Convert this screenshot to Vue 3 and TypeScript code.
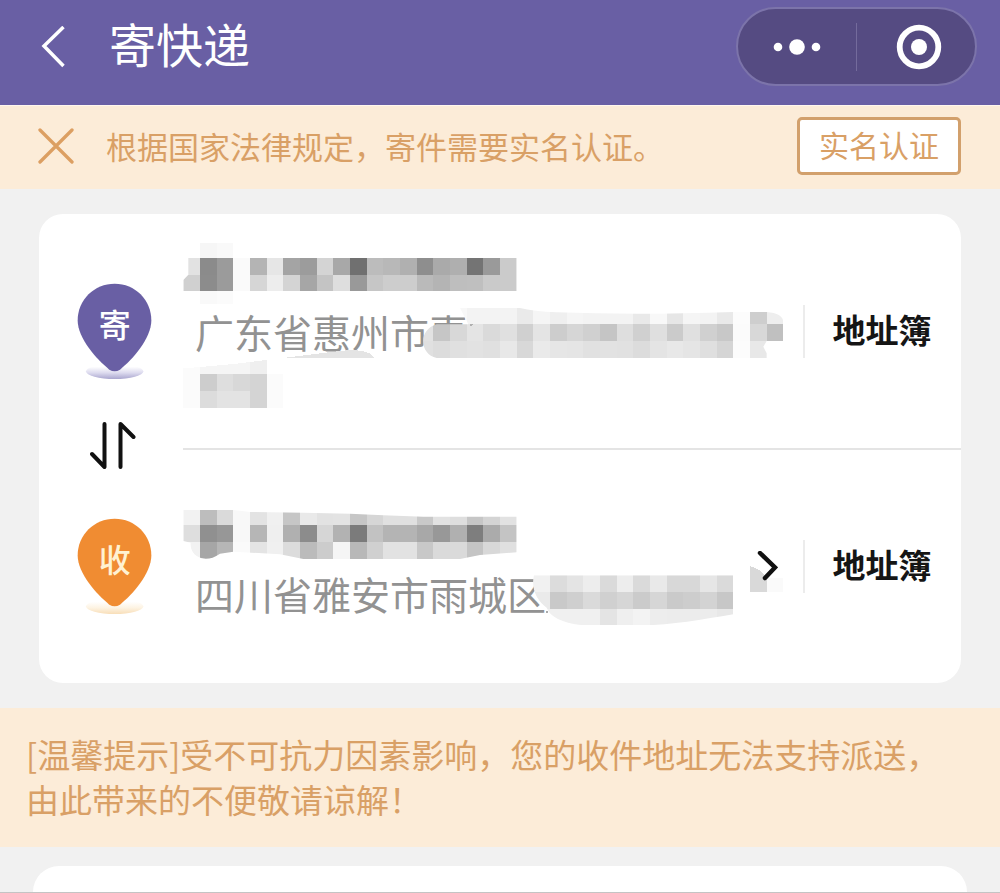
<script setup lang="ts">
interface Strip {
  x: number
  y: number
  h: number
  colors: string
}

interface Cell {
  x: number
  y: number
  w: number
  h: number
  fill: string
}

interface Contact {
  id: string
  label: string
  address: string
  lines: number
  viewBox: string
  height: number
  nameClip: string
  addressClip: string
  name: Cell[]
  detail: Cell[]
  extra: { d: string; fill: string }[]
  chevron: boolean
}

const CELL = 50

// Each strip is a run of equal cells; colours are two-digit grey levels.
function cells(strips: Strip[]): Cell[] {
  return strips.flatMap((s) =>
    s.colors.split(' ').map((c, i) => ({ x: s.x + i * CELL, y: s.y, w: CELL, h: s.h, fill: '#' + c + c + c })),
  )
}

const contacts: Contact[] = [
  {
    id: 'sender',
    label: '寄件人',
    address: '广东省惠州市惠',
    lines: 2,
    viewBox: '39 54 1860 498',
    height: 166,
    nameClip: 'M90 38H190V84H1040V184H190V222H90V184H40V150L55 134V84H90Z',
    addressClip:
      'M870 234H1050Q1090 244 1160 247Q1400 256 1690 246H1790Q1838 250 1840 275V333H1790L1780 350L1790 370V384H800C750 375 742 300 800 283H895Z',
    name: cells([
      { x: 90, y: 38, h: 46, colors: 'f6 f9' },
      { x: 40, y: 84, h: 50, colors: 'e2 8b 9b fa b4 e6 a4 9c d4 a8 70 bc b8 b0 8e aa af 74 9a cb' },
      { x: 40, y: 134, h: 50, colors: 'd0 8c 9b fa d6 ed d4 a6 c4 de 99 c6 cd cd ba b4 be bf ca cb' },
      { x: 90, y: 184, h: 38, colors: 'f9 fb' },
    ]),
    detail: cells([
      { x: 840, y: 234, h: 49, colors: 'f8 f3 f3 f3 ea f5 ef f5 f3 f3 f3 e9 f8 e6 f5 f3 e9 fc ce ee' },
      { x: 740, y: 283, h: 50, colors: 'e2 c6 d8 e4 da e0 d0 e4 cd d6 d0 c5 de d0 df cb e0 d0 c8 fb d8 c0' },
      { x: 740, y: 333, h: 51, colors: 'e0 dc e0 e2 e0 e8 d8 ea e6 e5 e1 e2 e1 dc e4 e8 e5 df d5 fc e8 fe' },
    ]),
    extra: [
      { d: 'M40 415Q180 405 290 390V433H340V533H40Z', fill: '#fbfbfb' },
      { d: 'M90 411Q190 403 240 396V433H90Z', fill: '#f5f5f5' },
      { d: 'M240 396L290 390V433H240Z', fill: '#efefef' },
      { d: 'M90 433H140V483H90Z', fill: '#cdcdcd' },
      { d: 'M140 433H190V483H140Z', fill: '#dedede' },
      { d: 'M190 433H240V483H190Z', fill: '#d8d8d8' },
      { d: 'M240 433H290V533H240Z', fill: '#d4d4d4' },
      { d: 'M90 483H140V533H90Z', fill: '#dcdcdc' },
      { d: 'M140 483H240V533H140Z', fill: '#e3e3e3' },
      { d: 'M340 384Q470 367 530 361Q600 358 612 384Z', fill: '#e4e4e4' },
      { d: 'M896 280L908 283L904 290Z', fill: '#b0b0b0' },
    ],
    chevron: false,
  },
  {
    id: 'receiver',
    label: '收件人',
    address: '四川省雅安市雨城区',
    lines: 1,
    viewBox: '39 57 1860 342',
    height: 114,
    nameClip:
      'M40 57H190L240 63L400 65L540 68L640 73L760 77H1040V184L930 192L870 204H400L330 190L190 182L150 188Q110 215 80 195Q60 180 62 155L40 150Z',
    addressClip:
      'M1092 253H1690V370C1600 385 1500 403 1420 403H1240C1170 395 1140 375 1130 350C1100 330 1082 290 1092 253Z',
    name: cells([
      { x: 40, y: 57, h: 45, colors: 'f2 bd da f8 e3 f0 c6 e9 e2 e3 c6 d6 e0 e0 c9 e2 de c6 d4 e2' },
      { x: 40, y: 102, h: 51, colors: 'de 90 97 f8 b6 ef b0 8c d6 b2 7b c2 b4 b4 a8 98 b0 7e ab c4' },
      { x: 40, y: 153, h: 62, colors: 'f2 a6 b6 fa e4 f0 dc bb cc f5 b8 d0 e2 e2 c8 da da c4 d8 e0' },
    ]),
    detail: cells([
      { x: 1090, y: 253, h: 50, colors: 'f1 dc e4 ed da ed da e9 d8 d8 e6 da' },
      { x: 1090, y: 303, h: 50, colors: 'ea c9 cf da d0 d6 cb d6 ca cd d3 c7' },
      { x: 1090, y: 353, h: 50, colors: 'f0 f0 f0 f0 e4 ef f3 ed ec ec ec e8' },
    ]),
    extra: [
      { d: 'M1740 225Q1780 238 1790 262V302H1740Z', fill: '#d9d9d9' },
      { d: 'M1790 262H1838V302H1790Z', fill: '#fafafa' },
      { d: 'M1128 360H1134V367H1128Z', fill: '#aaaaaa' },
    ],
    chevron: true,
  },
]
</script>

<template>
  <div class="page">
    <header class="header">
      <button class="icon-button" type="button" aria-label="返回">
        <svg width="24" height="42" viewBox="0 0 24 42" fill="none" stroke="#fff" stroke-width="3.500">
          <path d="M22.500 1 3 20 22.500 40" />
        </svg>
      </button>
      <h1 class="title">寄快递</h1>
      <div class="capsule">
        <button class="capsule-button" type="button" aria-label="更多">
          <svg width="48" height="18" viewBox="0 0 48 18" fill="#fff">
            <circle cx="5" cy="9" r="4.300" />
            <circle cx="24" cy="9" r="7.800" />
            <circle cx="43" cy="9" r="4.300" />
          </svg>
        </button>
        <span class="capsule-line"></span>
        <button class="capsule-button close" type="button" aria-label="关闭">
          <svg width="46" height="46" viewBox="0 0 46 46">
            <circle cx="23" cy="23" r="19.300" fill="none" stroke="#fff" stroke-width="5.800" />
            <circle cx="23" cy="23" r="8" fill="#fff" />
          </svg>
        </button>
      </div>
    </header>

    <section class="verify">
      <button class="icon-button" type="button" aria-label="关闭提示">
        <svg width="36" height="36" viewBox="0 0 36 36" fill="none" stroke="#dc9f62" stroke-width="3.300" stroke-linecap="round">
          <path d="M2 2 34 34M34 2 2 34" />
        </svg>
      </button>
      <p class="verify-text">根据国家法律规定，寄件需要实名认证。</p>
      <button class="verify-button" type="button">实名认证</button>
    </section>

    <main class="card">
      <div class="rail">
        <svg class="pin" width="75" height="96" viewBox="54 38 225 288" role="img" aria-label="寄">
          <defs>
            <linearGradient id="shade-send" x1="0" y1="0" x2="0" y2="1">
              <stop offset="0.200" stop-color="#ffffff" />
              <stop offset="0.600" stop-color="#dcdaee" />
              <stop offset="1" stop-color="#aaa6cf" />
            </linearGradient>
          </defs>
          <ellipse cx="167" cy="303" rx="86" ry="23" fill="url(#shade-send)" />
          <path
            d="M167 40C228 40 277 88 277 150C277 205 220 268 183 298Q167 308 151 298C114 268 56 205 56 150C56 88 106 40 167 40Z"
            fill="#695fa4"
          />
          <text class="pin-text" x="167" y="201" fill="#fff">寄</text>
        </svg>
        <button class="icon-button" type="button" aria-label="交换地址">
          <svg width="50" height="56" viewBox="0 0 50 56" fill="none" stroke="#111" stroke-width="4" stroke-linecap="round" stroke-linejoin="round">
            <path d="M2 33 14.500 46V3M30.500 46V3L43.500 16" />
          </svg>
        </button>
        <svg class="pin" width="75" height="96" viewBox="54 38 225 288" role="img" aria-label="收">
          <defs>
            <linearGradient id="shade-receive" x1="0" y1="0" x2="0" y2="1">
              <stop offset="0.200" stop-color="#ffffff" />
              <stop offset="0.600" stop-color="#fdf3e2" />
              <stop offset="1" stop-color="#f8deb8" />
            </linearGradient>
          </defs>
          <ellipse cx="167" cy="303" rx="86" ry="23" fill="url(#shade-receive)" />
          <path
            d="M167 40C228 40 277 88 277 150C277 205 220 268 183 298Q167 308 151 298C114 268 56 205 56 150C56 88 106 40 167 40Z"
            fill="#f08c32"
          />
          <text class="pin-text" x="167" y="201" fill="#fff2d2">收</text>
        </svg>
      </div>

      <div class="contacts">
        <section v-for="c in contacts" :key="c.id" class="contact" :aria-label="c.label">
          <div class="info">
            <p class="address" :class="{ tall: c.lines === 2 }">{{ c.address }}</p>
            <svg class="mosaic" width="620" :height="c.height" :viewBox="c.viewBox" shape-rendering="crispEdges" aria-hidden="true">
              <defs>
                <clipPath :id="c.id + '-name'"><path :d="c.nameClip" /></clipPath>
                <clipPath :id="c.id + '-detail'"><path :d="c.addressClip" /></clipPath>
              </defs>
              <g :clip-path="`url(#${c.id}-name)`">
                <rect v-for="(r, i) in c.name" :key="i" :x="r.x" :y="r.y" :width="r.w" :height="r.h" :fill="r.fill" />
              </g>
              <g :clip-path="`url(#${c.id}-detail)`">
                <rect v-for="(r, i) in c.detail" :key="i" :x="r.x" :y="r.y" :width="r.w" :height="r.h" :fill="r.fill" />
              </g>
              <path v-for="(e, i) in c.extra" :key="i" :d="e.d" :fill="e.fill" />
            </svg>
          </div>
          <button v-if="c.chevron" class="icon-button chevron" type="button" aria-label="编辑收件地址">
            <svg width="22" height="32" viewBox="0 0 22 32" fill="none" stroke="#111" stroke-width="4.500" stroke-linecap="round">
              <path d="M4 2 19 16.500 9 27" />
            </svg>
          </button>
          <button class="book" type="button">地址簿</button>
        </section>
      </div>
    </main>

    <p class="notice">[温馨提示]受不可抗力因素影响，您的收件地址无法支持派送，由此带来的不便敬请谅解！</p>

    <section class="next-card"></section>
  </div>
</template>

<style>
body {
  margin: 0;
}
</style>

<style scoped>
.page {
  box-sizing: border-box;
  display: flex;
  flex-direction: column;
  min-height: 100vh;
  border-bottom: 1px solid #c4c4c4;
  background: #f1f1f1;
  font-family: "Noto Sans CJK SC", sans-serif;
}

button {
  font-family: inherit;
  cursor: pointer;
}

.icon-button {
  display: flex;
  padding: 0;
  border: 0;
  background: none;
}

.header {
  display: flex;
  align-items: center;
  padding: 7px 23px 19px 41px;
  background: #695fa4;
}

.title {
  flex: 1;
  margin: 0 0 0 44px;
  padding-bottom: 7px;
  color: #fff;
  font-size: 47px;
  font-weight: 400;
  line-height: 64px;
}

.capsule {
  box-sizing: border-box;
  display: flex;
  align-items: center;
  width: 241px;
  height: 79px;
  border: 2px solid #7c74aa;
  border-radius: 40px;
  background: #554b82;
}

.capsule-button {
  box-sizing: border-box;
  display: flex;
  flex: 1 1 0;
  align-items: center;
  justify-content: center;
  height: 100%;
  padding: 0;
  border: 0;
  background: none;
}

.close svg {
  margin-left: 6px;
}

.capsule-line {
  width: 1px;
  height: 48px;
  background: #746b9c;
}

.verify {
  display: flex;
  align-items: center;
  padding: 11px 39px 14px 38px;
  border-top: 1px solid #fff6ee;
  background: #fcecd8;
}

.verify-text {
  flex: 1;
  margin: 0 0 0 32px;
  color: #d9a066;
  font-size: 31px;
  line-height: 44px;
}

.verify-button {
  padding: 0 19px 4px;
  border: 3px solid #d2a06c;
  border-radius: 5px;
  background: #fff;
  color: #d9a066;
  font-size: 30px;
  line-height: 48px;
}

.card {
  display: flex;
  margin: 25px 39px;
  border-radius: 24px;
  background: #fff;
}

.rail {
  box-sizing: border-box;
  display: flex;
  flex-direction: column;
  align-items: center;
  justify-content: space-between;
  width: 144px;
  padding: 69px 0 69px 7px;
}

.pin {
  display: block;
}

.pin-text {
  font-size: 96px;
  font-weight: 500;
  text-anchor: middle;
}

.contacts {
  flex: 1;
}

.contact {
  box-sizing: border-box;
  display: flex;
  align-items: center;
  height: 234px;
}

.contact + .contact {
  height: 235px;
  border-top: 2px solid #e4e4e4;
}

.info {
  position: relative;
  flex: 1;
  padding: 57px 0 5px 12px;
}

.address {
  margin: 0;
  color: #929292;
  font-size: 39px;
  line-height: 52px;
}

.tall {
  min-height: 104px;
}

.mosaic {
  position: absolute;
  top: 0;
  left: 0;
  overflow: visible;
}

.chevron {
  position: relative;
  margin-right: 25px;
}

.book {
  width: 158px;
  padding: 0 2px 4px 0;
  border: 0;
  border-left: 2px solid #ececec;
  background: none;
  color: #151515;
  font-size: 33px;
  font-weight: 700;
  line-height: 49px;
}

.notice {
  margin: 0;
  padding: 24px 50px 25px 26px;
  background: #fcecd8;
  color: #d9a066;
  font-size: 33px;
  line-height: 45px;
}

.next-card {
  flex: 1;
  min-height: 26px;
  margin: 19px 33px 0;
  border-radius: 28px 28px 0 0;
  background: #fff;
}
</style>
